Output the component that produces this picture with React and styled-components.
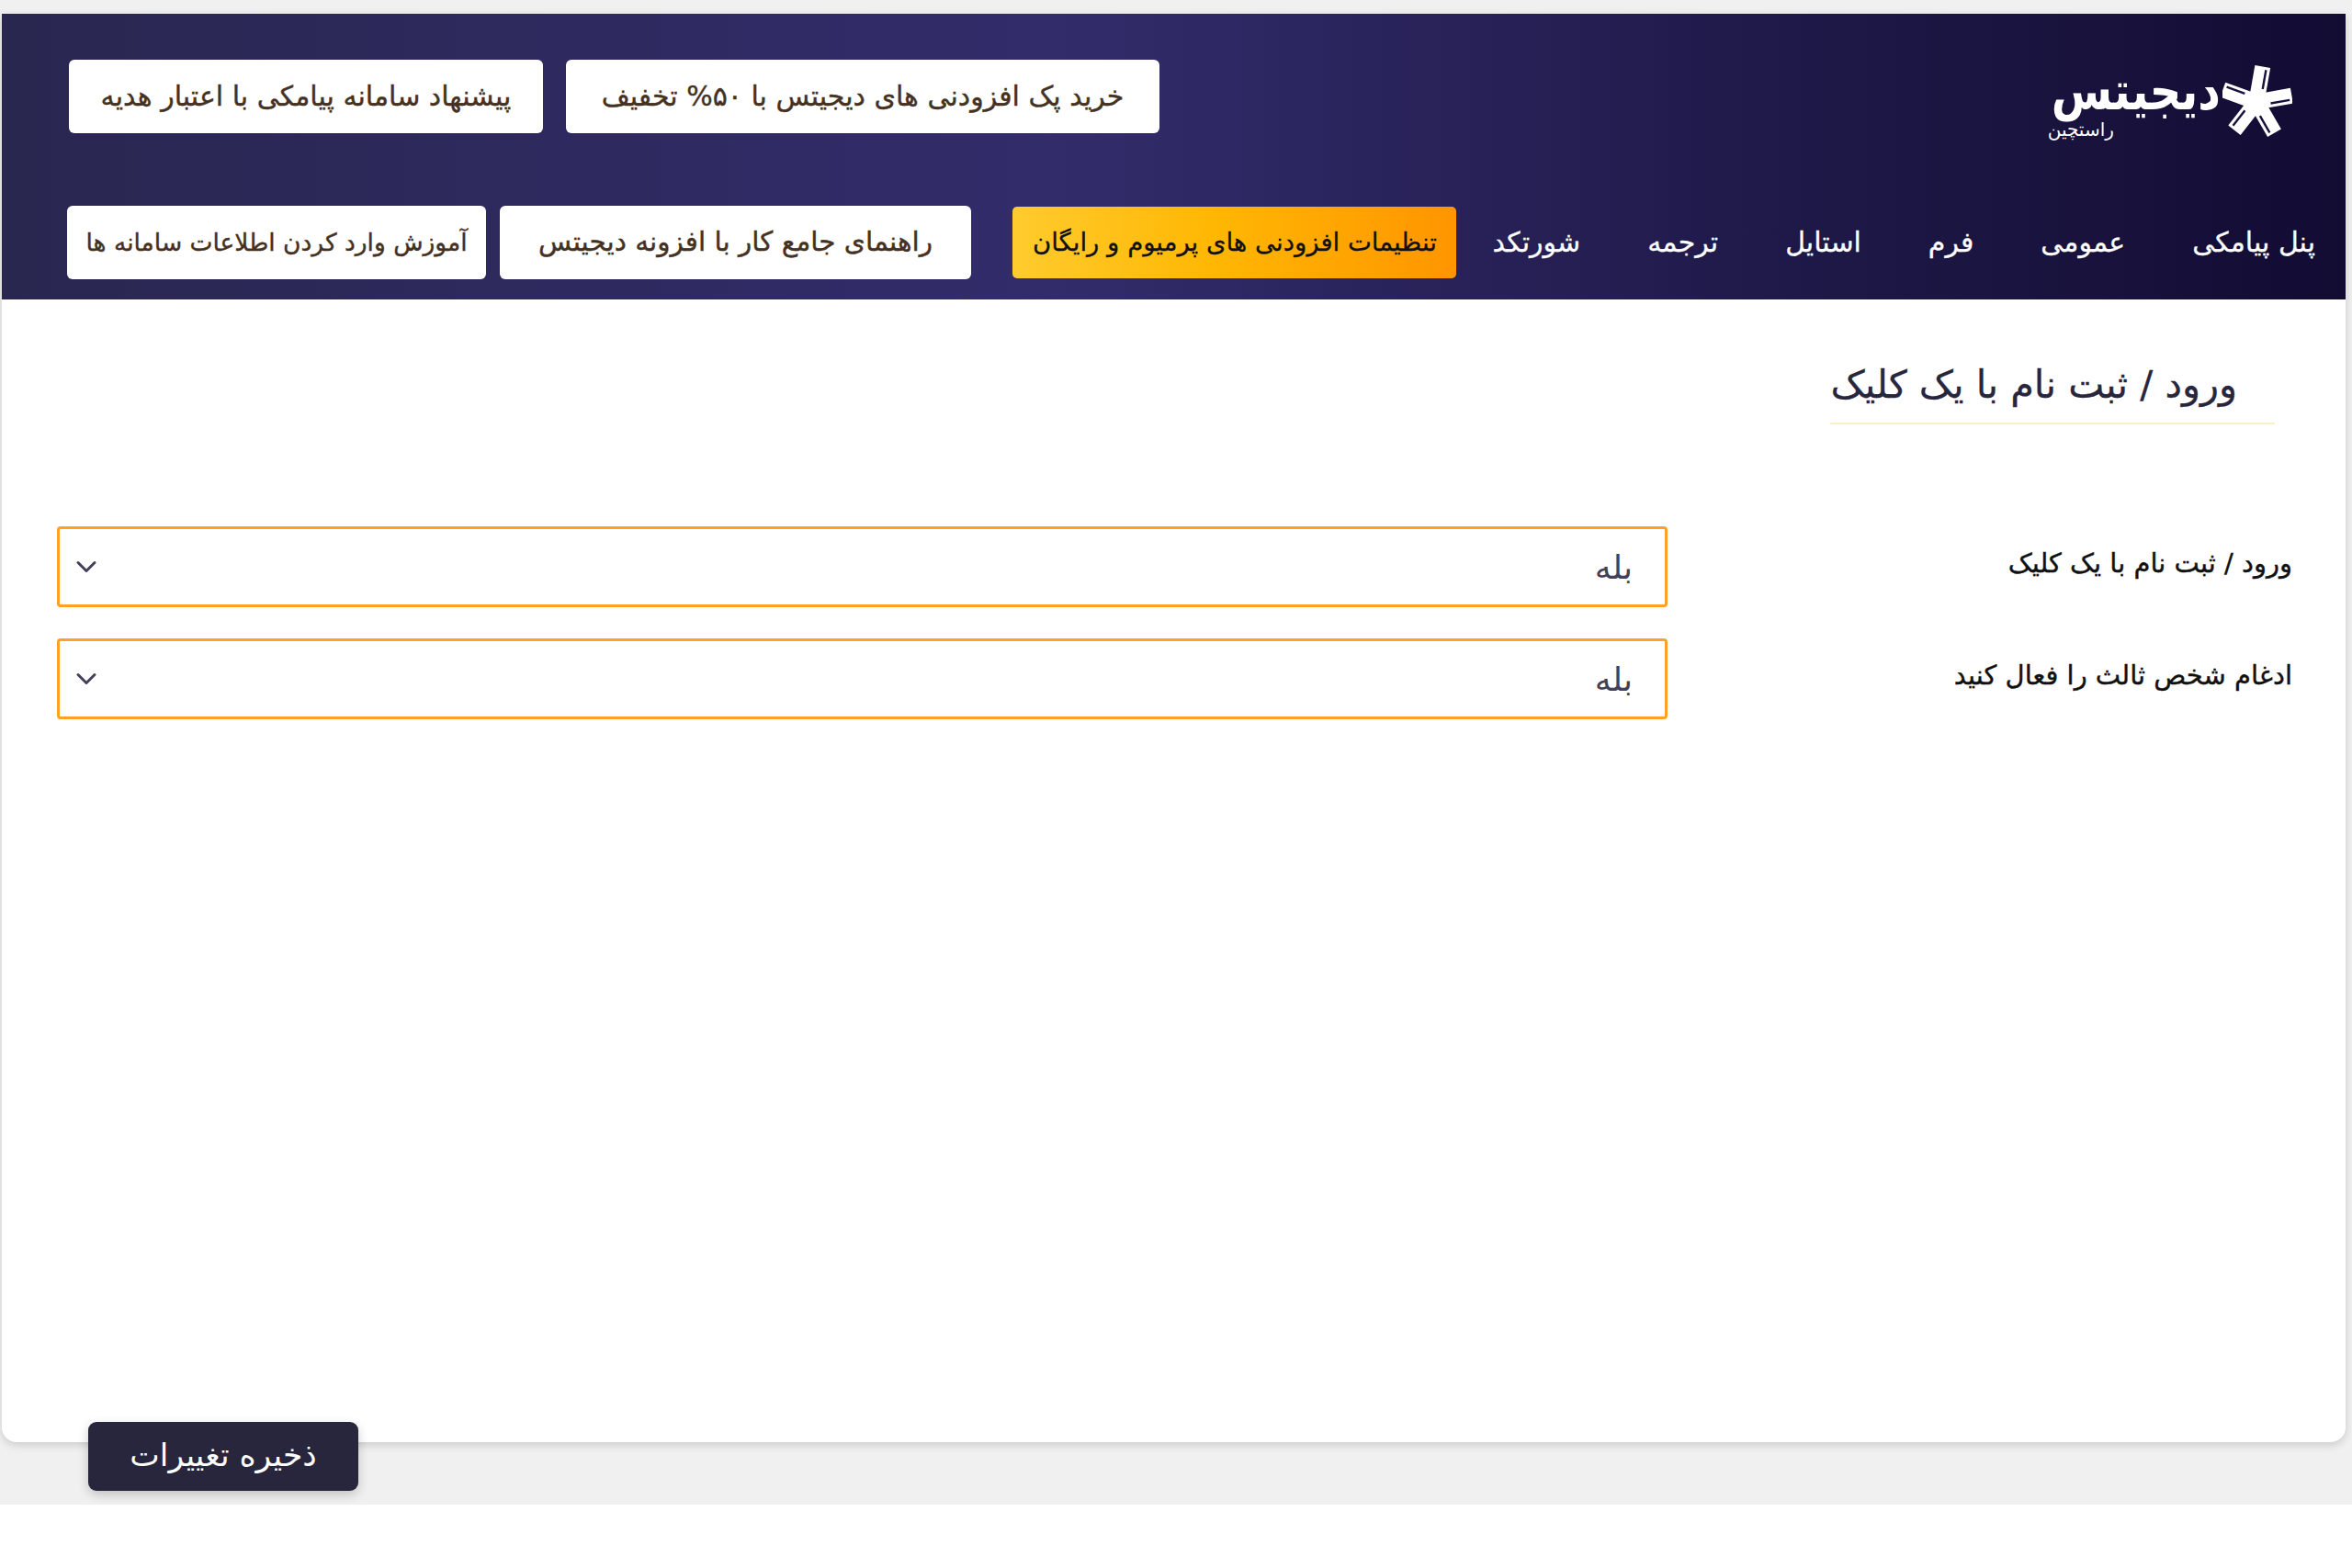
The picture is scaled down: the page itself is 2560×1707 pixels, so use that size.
import React from "react";
import styled, { createGlobalStyle } from "styled-components";
import { ChevronDown } from "lucide-react";

const Global = createGlobalStyle`
  html, body { margin: 0; padding: 0; background: #fff; }
  body { font-family: "DejaVu Sans", "Noto Sans", sans-serif; }
  * { box-sizing: border-box; }
`;
const Page = styled.div`
  height: 1638px;
  background: #f0f0f0;
  padding: 15px 7px 68px 2px;
`;
const Card = styled.main`
  position: relative;
  height: 1555px;
  background: #fff;
  border-radius: 0 0 16px 16px;
  box-shadow: 0 3px 10px rgba(0,0,0,.16);
  direction: rtl;
`;
const Header = styled.header`
  height: 311px;
  background: linear-gradient(90deg, #292750 0%, #322c6b 45%, #1e1847 78%, #120c33 100%);
  display: flex;
  flex-direction: column;
`;
const TopRow = styled.div`
  display: flex;
  justify-content: space-between;
  align-items: flex-start;
  height: 209px;
  padding: 50px 58px 0 73px;
`;
const Logo = styled.div`
  display: flex;
  align-items: flex-start;
  gap: 2px;
  padding-top: 6px;
  color: #fff;
`;
const LogoWords = styled.div`
  display: flex;
  flex-direction: column;
`;
const LogoName = styled.span`
  font-size: 48px;
  font-weight: 700;
  line-height: 54px;
  transform: scaleY(1.2);
  transform-origin: 50% 40%;
`;
const LogoSub = styled.span`
  font-size: 20px;
  line-height: 22px;
  margin-top: 5px;
  text-align: left;
  margin-left: -4px;
`;
const ButtonGroup = styled.div`
  display: flex;
  gap: ${p => p.$gap}px;
  margin-right: ${p => (p.$end ? "auto" : "0")};
`;
const LinkButton = styled.a`
  display: flex;
  align-items: center;
  justify-content: center;
  width: ${p => p.$w}px;
  height: 80px;
  padding-bottom: 2px;
  background: #fff;
  border-radius: 6px;
  color: #45311f;
  font-size: ${p => p.$size}px;
  -webkit-text-stroke: 0.4px #45311f;
  white-space: nowrap;
`;
const BottomRow = styled.div`
  display: flex;
  align-items: center;
  height: 80px;
  padding: 0 33px 0 71px;
`;
const Nav = styled.nav`
  display: flex;
  align-items: center;
  gap: 73px;
  padding-bottom: 2px;
`;
const NavItem = styled.a`
  color: #fff;
  font-size: 30px;
  -webkit-text-stroke: 0.3px #fff;
  white-space: nowrap;
`;
const PremiumButton = styled.a`
  display: flex;
  align-items: center;
  justify-content: center;
  width: 483px;
  height: 78px;
  margin-right: 39px;
  padding-bottom: 2px;
  border-radius: 5px;
  background: linear-gradient(90deg, #ffcb2e 0%, #ffb703 45%, #ff9500 100%);
  color: #111;
  font-size: 27.5px;
  -webkit-text-stroke: 0.3px #111;
  white-space: nowrap;
`;
const Body = styled.section`
  padding: 0 58px 0 60px;
`;
const TitleBlock = styled.div`
  width: 484px;
  margin-right: 19px;
  height: 136px;
  padding: 68px 41px 0 0;
  border-bottom: 2px solid #fdf0c8;
`;
const Title = styled.h2`
  margin: 0;
  font-size: 41.5px;
  font-weight: 400;
  line-height: 50px;
  color: #27263c;
  -webkit-text-stroke: 0.3px #27263c;
  white-space: nowrap;
`;
const Fields = styled.div`
  display: flex;
  flex-direction: column;
  gap: 34px;
  margin-top: 111px;
`;
const Row = styled.div`
  display: flex;
  justify-content: space-between;
`;
const Label = styled.label`
  font-size: 29px;
  line-height: 34px;
  padding-top: 23px;
  color: #111;
  -webkit-text-stroke: 0.4px #111;
  white-space: nowrap;
`;
const SelectBox = styled.div`
  display: flex;
  align-items: center;
  justify-content: space-between;
  width: 1753px;
  height: 88px;
  padding: 0 35px 0 11px;
  border: 3px solid #ffa126;
  border-radius: 4px;
  color: #42415a;
  font-size: 36px;
`;
const SaveButton = styled.button`
  position: absolute;
  left: 94px;
  bottom: -53px;
  width: 294px;
  height: 75px;
  padding-bottom: 4px;
  border: 0;
  border-radius: 9px;
  background: #27263c;
  color: #fff;
  font-family: inherit;
  font-size: 34.5px;
  box-shadow: 0 4px 12px rgba(0,0,0,.2);
`;

const ARMS = [10, 80, 150, 218, 290];
const Asterisk = () => (
  <svg width="76" height="80" viewBox="0 0 76 80" aria-hidden="true">
    <g transform="translate(37 40)">
      {ARMS.map(a => (
        <g key={a} transform={`rotate(${a})`}>
          <rect x="-8.5" y="-39" width="17" height="39" fill="#fff" />
          <rect x="3" y="-36" width="2.4" height="21" fill="#17113c" />
        </g>
      ))}
    </g>
  </svg>
);

const NAV = ["پنل پیامکی", "عمومی", "فرم", "استایل", "ترجمه", "شورتکد"];

export default function App() {
  return (
    <Page>
      <Global />
      <Card>
        <Header>
          <TopRow>
            <Logo>
              <Asterisk />
              <LogoWords>
                <LogoName>دیجیتس</LogoName>
                <LogoSub>راستچین</LogoSub>
              </LogoWords>
            </Logo>
            <ButtonGroup $gap={25}>
              <LinkButton $w={646} $size={30}>خرید پک افزودنی های دیجیتس با ۵۰% تخفیف</LinkButton>
              <LinkButton $w={516} $size={30}>پیشنهاد سامانه پیامکی با اعتبار هدیه</LinkButton>
            </ButtonGroup>
          </TopRow>
          <BottomRow>
            <Nav>
              {NAV.map(n => <NavItem key={n}>{n}</NavItem>)}
            </Nav>
            <PremiumButton>تنظیمات افزودنی های پرمیوم و رایگان</PremiumButton>
            <ButtonGroup $gap={15} $end>
              <LinkButton $w={513} $size={29.5}>راهنمای جامع کار با افزونه دیجیتس</LinkButton>
              <LinkButton $w={456} $size={26.5}>آموزش وارد کردن اطلاعات سامانه ها</LinkButton>
            </ButtonGroup>
          </BottomRow>
        </Header>
        <Body>
          <TitleBlock><Title>ورود / ثبت نام با یک کلیک</Title></TitleBlock>
          <Fields>
            <Row>
              <Label>ورود / ثبت نام با یک کلیک</Label>
              <SelectBox>بله<ChevronDown size={36} strokeWidth={2} /></SelectBox>
            </Row>
            <Row>
              <Label>ادغام شخص ثالث را فعال کنید</Label>
              <SelectBox>بله<ChevronDown size={36} strokeWidth={2} /></SelectBox>
            </Row>
          </Fields>
        </Body>
        <SaveButton>ذخیره تغییرات</SaveButton>
      </Card>
    </Page>
  );
}
